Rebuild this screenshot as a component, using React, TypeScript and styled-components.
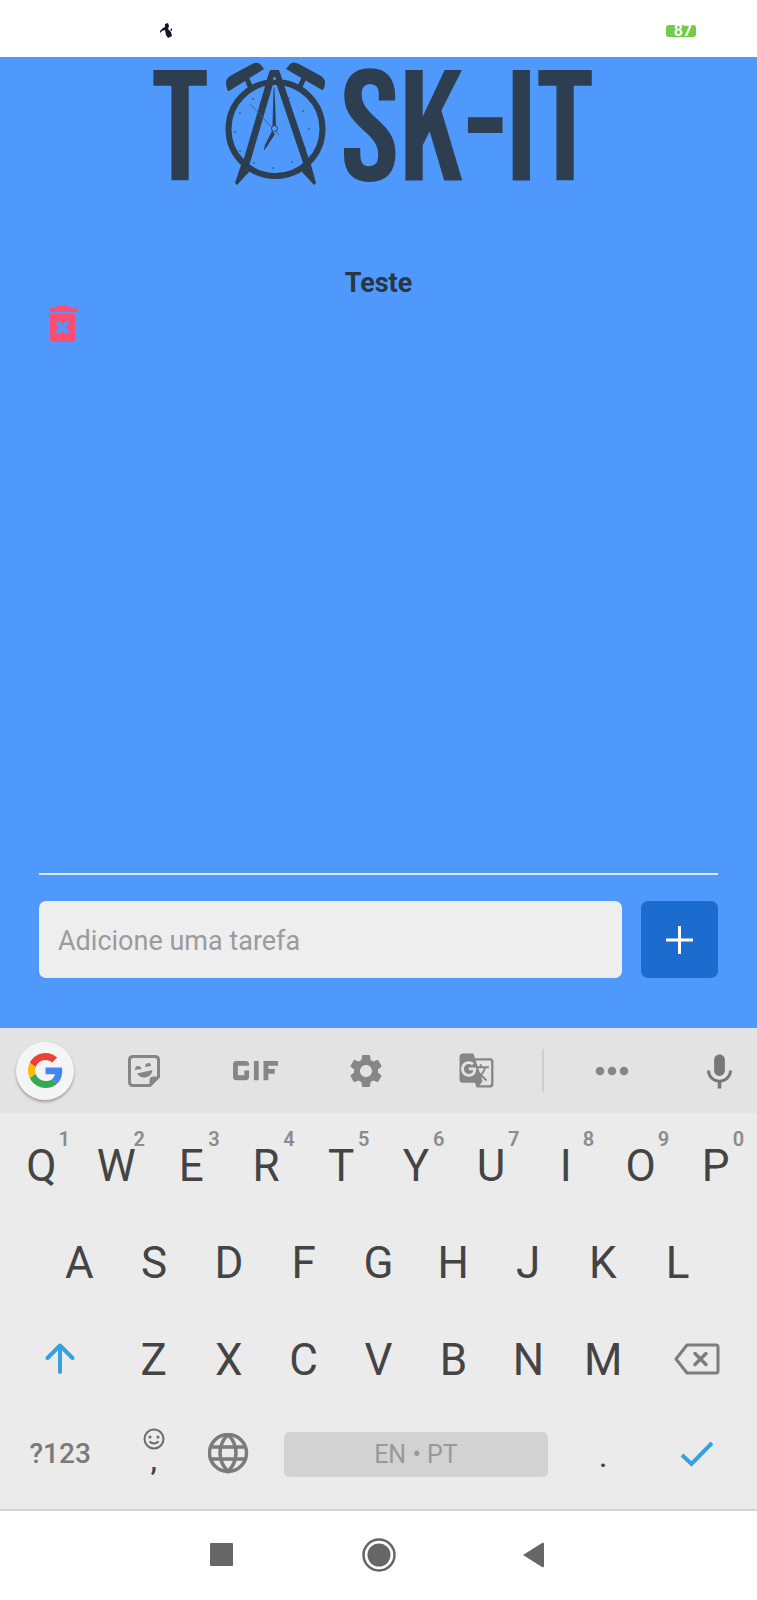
import React, { useState } from "react";
import styled, { createGlobalStyle } from "styled-components";
import { MdGif, MdGTranslate, MdKeyboardVoice, MdSettings } from "react-icons/md";

const GlobalStyle = createGlobalStyle`
  * { box-sizing: border-box; }
  body { margin: 0; font-family: Roboto, "Liberation Sans", sans-serif; }
  button { border: 0; padding: 0; margin: 0; background: none; font-family: inherit; cursor: pointer; }
  svg { display: block; flex: none; }
`;

const Screen = styled.div`
  min-height: 100vh;
  display: flex;
  flex-direction: column;
  background: #4f99fd;
`;

const StatusBar = styled.header`
  height: 57px;
  padding: 4px 61px 0 157px;
  display: flex;
  align-items: center;
  justify-content: space-between;
  background: #fff;
`;

const Battery = styled.span`
  width: 30px;
  height: 12px;
  padding-left: 4px;
  border-radius: 3px;
  background: #72cc44;
  color: #fff;
  text-align: center;
  font-size: 16px;
  line-height: 12px;
  font-weight: 600;
`;

const Main = styled.main`
  flex: 1;
  padding: 0 39px 50px;
  display: flex;
  flex-direction: column;
`;

const Logo = styled.h1`
  margin: 0;
  padding-right: 12px;
  height: 134px;
  display: flex;
  justify-content: center;
  color: #2d3e50;
  font-family: "Bebas Neue", "Open Sans Condensed", "Roboto Condensed", sans-serif;
  font-weight: 400;
  font-size: 157px;
  font-kerning: none;
  line-height: 152px;
  white-space: nowrap;
`;

const LogoClock = styled.svg`
  margin: 4px 14px 0 16px;
`;

const TaskList = styled.ul`
  flex: 1;
  margin: 0;
  padding: 76px 0 0;
  list-style: none;
`;

const Task = styled.li`
  padding: 0 9px;
`;

const TaskTitle = styled.p`
  margin: 0;
  text-align: center;
  font-size: 27px;
  line-height: 32px;
  font-weight: 700;
  color: #2b3640;
`;

const DeleteButton = styled.button`
  display: block;
  margin-top: 6px;
`;

const TaskForm = styled.form`
  border-top: 2px solid #dceafe;
  padding-top: 26px;
  display: flex;
  gap: 19px;
`;

const TaskInput = styled.input`
  flex: 1;
  min-width: 0;
  height: 77px;
  padding: 2px 19px 0;
  border: 0;
  border-radius: 7px;
  background: #eee;
  color: #333;
  font-family: inherit;
  font-size: 27px;
  &::placeholder { color: #9b9b9b; opacity: 1; }
`;

const AddButton = styled.button`
  width: 77px;
  height: 77px;
  border-radius: 7px;
  background: #1c6cd0;
  display: flex;
  align-items: center;
  justify-content: center;
`;

const Keyboard = styled.section`
  background: #ebebeb;
  border-bottom: 2px solid #d5d5d5;
  padding-bottom: 9px;
`;

const Toolbar = styled.div`
  height: 85px;
  margin-bottom: 4px;
  display: flex;
  background: #e3e3e3;
  color: #868686;
`;

const Tool = styled.button<{ $grow: number; $align?: string }>`
  flex: ${(p) => p.$grow} 1 0;
  min-width: 0;
  display: flex;
  align-items: center;
  justify-content: ${(p) => p.$align ?? "center"};
  color: inherit;
`;

const VoiceTool = styled(Tool)`
  color: #777;
  svg { margin-right: 16px; }
`;

const GoogleBadge = styled.span`
  width: 58px;
  height: 58px;
  margin-left: 16px;
  border-radius: 50%;
  background: #f5f5f5;
  box-shadow: 0 2px 3px rgba(0, 0, 0, 0.3);
  display: flex;
  align-items: center;
  justify-content: center;
`;

const Divider = styled.div`
  flex: 22 1 0;
  display: flex;
  align-items: center;
  justify-content: center;
  &::after {
    content: "";
    width: 2px;
    height: 43px;
    background: #cfcfcf;
  }
`;

const KeyRow = styled.div<{ $inset?: boolean; $short?: boolean }>`
  height: ${(p) => (p.$short ? "92px" : "97px")};
  display: flex;
  padding: 0 ${(p) => (p.$inset ? "42px" : "4px")};
`;

const Key = styled.button<{ $span?: number }>`
  position: relative;
  flex: ${(p) => p.$span ?? 2} 1 0;
  min-width: 0;
  display: flex;
  align-items: center;
  justify-content: center;
  color: #444;
  font-size: 44px;
  line-height: 52px;
`;

const Hint = styled.span`
  position: absolute;
  top: 12px;
  right: 9px;
  color: #8b8b8b;
  font-size: 20px;
  line-height: 20px;
  font-weight: 600;
`;

const SymbolsKey = styled(Key)`
  color: #7a7a7a;
  font-size: 28px;
  font-weight: 500;
`;

const CommaKey = styled(Key)`
  font-size: 28px;
  line-height: 22px;
  font-weight: 600;
  flex-direction: column;
  padding-bottom: 8px;
`;

const PeriodKey = styled(Key)`
  font-size: 28px;
  line-height: 28px;
  font-weight: 500;
  padding-top: 8px;
`;

const SpaceBar = styled.span`
  flex: 1;
  height: 45px;
  margin: 0 18px;
  border-radius: 5px;
  background: #d2d2d2;
  color: #999;
  font-size: 25px;
  line-height: 46px;
`;

const NavBar = styled.nav`
  height: 89px;
  padding-bottom: 2px;
  display: flex;
  justify-content: center;
  background: #fff;
`;

const NavButton = styled.button`
  flex: 0 1 157px;
  display: flex;
  align-items: center;
  justify-content: center;
`;

const ticks = [
  [28, 38], [15, 52], [10, 71], [15, 90], [29, 102], [48, 107],
  [67, 101], [80, 87], [84, 68], [78, 50], [64, 37],
];

function AlarmClock() {
  return (
    <LogoClock width="102" height="124" viewBox="0 0 102 124" fill="#2d3e50" aria-label="A" role="img">
      <path d="M1 22Q1 18 5 15L27 3Q33 0 36 4L39 8L4 30Q2 31 1 22ZM100 21Q100 18 96 15L74 3Q68 0 65 3L61 8L97 29Q100 28 100 21Z" />
      <path d="M22 18L27 30M79 17L74 28" stroke="#2d3e50" strokeWidth="5" />
      <circle cx="50.5" cy="68" r="47" fill="none" stroke="#2d3e50" strokeWidth="6" />
      <path d="M45 9H54L57 18H42Z" />
      <path d="M47 14L21 103M52 14L82 103" stroke="#2d3e50" strokeWidth="7" />
      <circle cx="49.5" cy="17.5" r="1.5" fill="#4f99fd" />
      <path d="M17 101L25 104L24 111L12 124L10 122ZM78 103L85 100L91 122L89 124L77 111Z" />
      <path d="M48.5 28Q49 24 49.5 28L51 65H47.5ZM47 70L50 73L41 87L38.5 90L40 84Z" />
      <path d="M25 43L54 74" stroke="#41658f" strokeWidth="1" />
      <circle cx="49.5" cy="67.5" r="3" fill="#4f99fd" stroke="#2d3e50" strokeWidth="1" />
      {ticks.map(([x, y]) => (
        <circle key={`${x}-${y}`} cx={x} cy={y} r="0.8" />
      ))}
    </LogoClock>
  );
}

function NotificationMark() {
  return (
    <svg width="18" height="16" viewBox="0 0 18 16" fill="#15132b" aria-hidden="true">
      <path d="M8 1L11 0L12 3L11 6L14 9L15 13L11 15L9 12L8 7L5 8L3 10L3 8L6 5L8 4Z" />
      <path d="M13 7L15 5L15 8Z" />
    </svg>
  );
}

function TrashIcon() {
  return (
    <svg width="30" height="38" viewBox="0 0 30 38" aria-hidden="true">
      <path
        fill="#fb4c72"
        d="M2 3H7Q9 0 15 0T22 3H28Q29 3 29 5T28 7H2Q1 7 1 5T2 3ZM2 9H27V34Q27 37 24 37H5Q2 37 2 34Z"
      />
      <path d="M9 17L20 28M20 17L9 28" stroke="#4f99fd" strokeWidth="4.5" />
    </svg>
  );
}

function GoogleIcon() {
  return (
    <svg width="35" height="35" viewBox="0 0 48 48" aria-hidden="true">
      <path fill="#ea4335" d="M24 9.5c3.54 0 6.71 1.22 9.21 3.6l6.85-6.85C35.9 2.38 30.47 0 24 0 14.62 0 6.51 5.38 2.56 13.22l7.98 6.19C12.43 13.72 17.74 9.5 24 9.5z" />
      <path fill="#4285f4" d="M46.98 24.55c0-1.57-.15-3.09-.38-4.55H24v9.02h12.94c-.58 2.96-2.26 5.48-4.78 7.18l7.73 6c4.51-4.18 7.09-10.36 7.09-17.65z" />
      <path fill="#fbbc05" d="M10.53 28.59c-.48-1.45-.76-2.99-.76-4.59s.27-3.14.76-4.59l-7.98-6.19C.92 16.46 0 20.12 0 24c0 3.88.92 7.54 2.56 10.78l7.97-6.19z" />
      <path fill="#34a853" d="M24 48c6.48 0 11.93-2.13 15.89-5.81l-7.73-6c-2.15 1.45-4.92 2.3-8.16 2.3-6.26 0-11.57-4.22-13.47-9.91l-7.98 6.19C6.51 42.62 14.62 48 24 48z" />
    </svg>
  );
}

function StickerIcon() {
  return (
    <svg width="32" height="32" viewBox="0 0 32 32" fill="none" stroke="currentColor" strokeWidth="3" aria-hidden="true">
      <path d="M5 1.5H27Q30.5 1.5 30.5 5V22L22 30.5H5Q1.5 30.5 1.5 27V5Q1.5 1.5 5 1.5Z" />
      <path d="M30 22H25Q22 22 22 25V30Z" fill="currentColor" strokeWidth="1" />
      <path d="M7 15Q7 11 10 11T13.5 14ZM17 12Q17 8.5 20 8T23 11ZM9 18.5L24.5 15Q23.5 22 17 22.5Q12 23 9 18.5Z" fill="currentColor" stroke="none" />
    </svg>
  );
}

function MoreIcon() {
  return (
    <svg width="34" height="10" viewBox="0 0 34 10" fill="currentColor" aria-hidden="true">
      <circle cx="5" cy="5" r="4.3" />
      <circle cx="17" cy="5" r="4.3" />
      <circle cx="29" cy="5" r="4.3" />
    </svg>
  );
}

function ShiftIcon() {
  return (
    <svg width="30" height="34" viewBox="0 0 30 34" fill="none" stroke="#38a1dc" strokeWidth="4" strokeLinecap="round" strokeLinejoin="round" aria-hidden="true">
      <path d="M15 29V3M2.5 15L15 2.5L27.5 15" />
    </svg>
  );
}

function BackspaceIcon() {
  return (
    <svg width="46" height="34" viewBox="0 0 46 34" fill="none" stroke="#7d7d7d" strokeWidth="3" strokeLinejoin="round" aria-hidden="true">
      <path d="M13 2H42Q44 2 44 4V28Q44 30 42 30H13L2 16Z" />
      <path d="M21 10.5L32 21.5M32 10.5L21 21.5" strokeWidth="3.5" strokeLinecap="round" />
    </svg>
  );
}

function SmileIcon() {
  return (
    <svg width="22" height="22" viewBox="0 0 22 22" fill="none" stroke="#6c6c6c" strokeWidth="2" aria-hidden="true">
      <circle cx="11" cy="11" r="9.5" />
      <path d="M6.5 13.5Q11 17.5 15.5 13.5" />
      <circle cx="7" cy="9" r="1.5" fill="#6c6c6c" stroke="none" />
      <circle cx="15" cy="9" r="1.5" fill="#6c6c6c" stroke="none" />
    </svg>
  );
}

function GlobeIcon() {
  return (
    <svg width="42" height="42" viewBox="0 0 42 42" fill="none" stroke="#7b7b7b" strokeWidth="3.5" aria-hidden="true">
      <circle cx="20" cy="20" r="18.5" />
      <path d="M20 1.5Q12 9.5 12 20T20 38.5Q28 30.5 28 20T20 1.5ZM3 14H37M3 26H37" />
    </svg>
  );
}

function CheckIcon() {
  return (
    <svg width="34" height="26" viewBox="0 0 34 26" fill="none" stroke="#38a1dc" strokeWidth="4" aria-hidden="true">
      <path d="M2 14L11.5 23L32 2" />
    </svg>
  );
}

const topRow = [..."QWERTYUIOP"];
const homeRow = [..."ASDFGHJKL"];
const bottomRow = [..."ZXCVBNM"];

export default function App() {
  const [draft, setDraft] = useState("");
  const [tasks, setTasks] = useState(["Teste"]);

  const addTask = (event: React.FormEvent) => {
    event.preventDefault();
    if (!draft.trim()) return;
    setTasks([...tasks, draft.trim()]);
    setDraft("");
  };
  const type = (letter: string) => () => setDraft((text) => text + letter);

  return (
    <Screen>
      <GlobalStyle />
      <StatusBar>
        <NotificationMark />
        <Battery>87</Battery>
      </StatusBar>

      <Main>
        <Logo>
          <span>T</span>
          <AlarmClock />
          <span>SK-IT</span>
        </Logo>
        <TaskList>
          {tasks.map((task, index) => (
            <Task key={index}>
              <TaskTitle>{task}</TaskTitle>
              <DeleteButton
                type="button"
                aria-label={`Excluir ${task}`}
                onClick={() => setTasks(tasks.filter((_, i) => i !== index))}
              >
                <TrashIcon />
              </DeleteButton>
            </Task>
          ))}
        </TaskList>
        <TaskForm onSubmit={addTask}>
          <TaskInput
            aria-label="Adicione uma tarefa"
            placeholder="Adicione uma tarefa"
            value={draft}
            onChange={(event) => setDraft(event.target.value)}
          />
          <AddButton type="submit" aria-label="Adicionar">
            <svg width="28" height="28" viewBox="0 0 28 28" stroke="#fff" strokeWidth="3" aria-hidden="true">
              <path d="M13.5 0V28M0 14H27" />
            </svg>
          </AddButton>
        </TaskForm>
      </Main>

      <Keyboard aria-label="Teclado">
        <Toolbar>
          <Tool type="button" $grow={89} $align="flex-start" aria-label="Google">
            <GoogleBadge><GoogleIcon /></GoogleBadge>
          </Tool>
          <Tool type="button" $grow={111} aria-label="Figurinhas"><StickerIcon /></Tool>
          <Tool type="button" $grow={111} aria-label="GIF"><MdGif size={77} /></Tool>
          <Tool type="button" $grow={111} aria-label="Configurações"><MdSettings size={40} /></Tool>
          <Tool type="button" $grow={111} aria-label="Tradutor"><MdGTranslate size={37} /></Tool>
          <Divider />
          <Tool type="button" $grow={116} aria-label="Mais"><MoreIcon /></Tool>
          <VoiceTool type="button" $grow={87} $align="flex-end" aria-label="Voz"><MdKeyboardVoice size={43} /></VoiceTool>
        </Toolbar>
        <KeyRow>
          {topRow.map((letter, index) => (
            <Key key={letter} type="button" onClick={type(letter)}>
              {letter}
              <Hint>{(index + 1) % 10}</Hint>
            </Key>
          ))}
        </KeyRow>
        <KeyRow $inset>
          {homeRow.map((letter) => (
            <Key key={letter} type="button" onClick={type(letter)}>{letter}</Key>
          ))}
        </KeyRow>
        <KeyRow>
          <Key type="button" $span={3} aria-label="Shift"><ShiftIcon /></Key>
          {bottomRow.map((letter) => (
            <Key key={letter} type="button" onClick={type(letter)}>{letter}</Key>
          ))}
          <Key type="button" $span={3} aria-label="Apagar" onClick={() => setDraft(draft.slice(0, -1))}>
            <BackspaceIcon />
          </Key>
        </KeyRow>
        <KeyRow $short>
          <SymbolsKey type="button" $span={3}>?123</SymbolsKey>
          <CommaKey type="button" onClick={type(",")}>
            <SmileIcon />
            <span>,</span>
          </CommaKey>
          <Key type="button" aria-label="Idioma"><GlobeIcon /></Key>
          <Key type="button" $span={8} onClick={type(" ")}>
            <SpaceBar>EN • PT</SpaceBar>
          </Key>
          <PeriodKey type="button" onClick={type(".")}>.</PeriodKey>
          <Key type="button" $span={3} aria-label="Concluir"><CheckIcon /></Key>
        </KeyRow>
      </Keyboard>

      <NavBar>
        <NavButton type="button" aria-label="Recentes">
          <svg width="23" height="23" viewBox="0 0 23 23"><rect width="23" height="23" rx="1" fill="#666" /></svg>
        </NavButton>
        <NavButton type="button" aria-label="Início">
          <svg width="34" height="34" viewBox="0 0 34 34">
            <circle cx="17" cy="17" r="15.5" fill="none" stroke="#666" strokeWidth="2.5" />
            <circle cx="17" cy="17" r="11.5" fill="#666" />
          </svg>
        </NavButton>
        <NavButton type="button" aria-label="Voltar">
          <svg width="26" height="26" viewBox="0 0 26 26"><path d="M0 13L19 1Q21 0 21 2V24Q21 26 19 25Z" fill="#666" /></svg>
        </NavButton>
      </NavBar>
    </Screen>
  );
}
